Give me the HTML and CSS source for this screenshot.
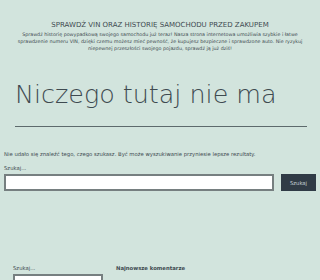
FILE: index.html
```html
<!DOCTYPE html>
<html lang="pl">
<head>
  <meta charset="UTF-8" />
  <meta name="viewport" content="width=device-width, initial-scale=1.0" />
  <title>Nie znaleziono strony</title>
  <link rel="stylesheet" href="styles.css">
</head>
<body>
  <header class="site-header">
    <p class="site-title">Sprawdź VIN oraz historię samochodu przed zakupem</p>
    <p class="site-desc">Sprawdź historię powypadkową swojego samochodu już teraz! Nasza strona internetowa umożliwia szybkie i łatwe sprawdzenie numeru VIN, dzięki czemu możesz mieć pewność, że kupujesz bezpieczne i sprawdzone auto. Nie ryzykuj niepewnej przeszłości swojego pojazdu, sprawdź ją już dziś!</p>
  </header>

  <main class="content">
    <h1 class="page-title">Niczego tutaj nie ma</h1>
    <p class="notice">Nie udało się znaleźć tego, czego szukasz. Być może wyszukiwanie przyniesie lepsze rezultaty.</p>
    <form class="search-form">
      <label class="search-label" for="s">Szukaj...</label>
      <div class="search-row">
        <input type="search" id="s" class="search-field">
        <button type="button" class="search-submit">Szukaj</button>
      </div>
    </form>
  </main>

  <footer class="widgets">
    <div class="widget">
      <label class="search-label" for="s2">Szukaj...</label>
      <input type="search" id="s2" class="search-field">
    </div>
    <div class="widget">
      <h2 class="widget-title">Najnowsze komentarze</h2>
    </div>
  </footer>
</body>
</html>
```

FILE: styles.css
```css
:root {
  --bg: #d2e4dd;
  --text: #3e4a50;
  --dark: #303b46;
}

body {
  background: var(--bg);
  color: var(--text);
  font-family: "DejaVu Sans", sans-serif;
  margin: 0;
}

/* --- HEADER --- */
.site-header {
  text-align: center;
  padding: 21px 15px 0;
}
.site-title {
  font-size: 7px;
  line-height: 8px;
  text-transform: uppercase;
  margin: 0 0 2px;
}
.site-desc {
  font-size: 4.8px;
  line-height: 7px;
  margin: 0;
}

/* --- CONTENT --- */
.content {
  padding: 0 4px;
}
.page-title {
  font-size: 25.4px;
  font-weight: 200;
  line-height: 30px;
  margin: 27px 9px 0 11px;
  padding-bottom: 17px;
  border-bottom: 1px solid #5d6a6c;
}
.notice {
  font-size: 5.3px;
  margin: 24px 0 0;
}
.search-label {
  display: block;
  font-size: 5.3px;
  margin: 8px 0 3px;
}
.search-row {
  display: flex;
  gap: 7px;
}
.search-field {
  flex: 1;
  height: 17px;
  box-sizing: border-box;
  border: 2px solid #767f80;
  background: #fff;
  margin: 0;
}
.search-submit {
  width: 35px;
  height: 17px;
  background: var(--dark);
  color: #c9d2d6;
  border: none;
  font-family: inherit;
  font-size: 5.3px;
  padding: 0;
}

/* --- WIDGETS --- */
.widgets {
  display: grid;
  grid-template-columns: 90px 1fr;
  gap: 13px;
  padding: 74px 13px 0;
}
.widgets .search-label {
  margin-top: 0;
}
.widgets .search-field {
  width: 100%;
  display: block;
}
.widget-title {
  font-size: 5.3px;
  font-weight: bold;
  margin: 0;
}
```
